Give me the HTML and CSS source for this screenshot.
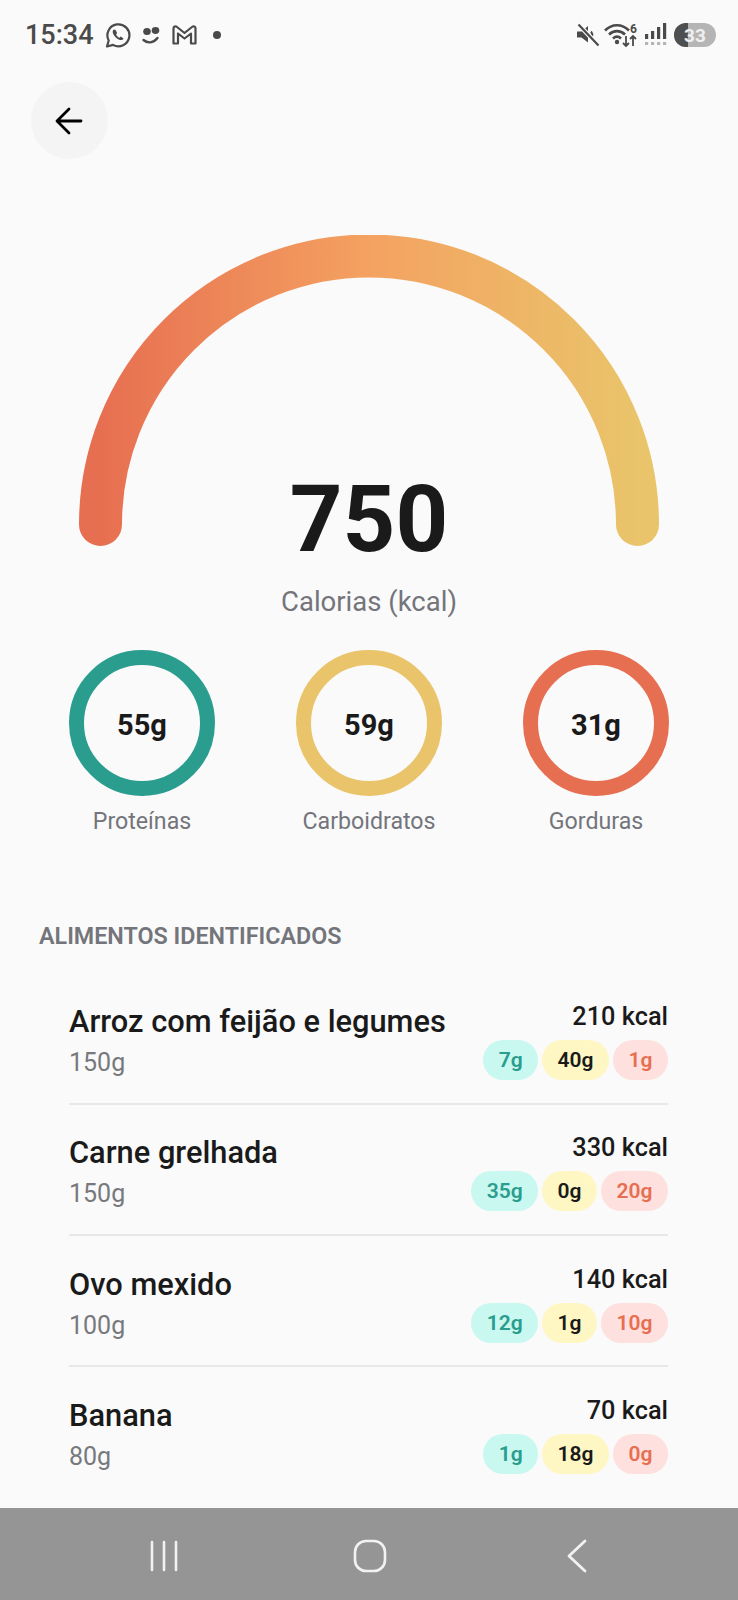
FILE: index.html
```html
<!DOCTYPE html>
<html lang="pt">
<head>
    <meta charset="UTF-8">
    <meta name="viewport" content="width=device-width, initial-scale=1.0">
    <title>Calorias</title>
    <link rel="stylesheet" href="styles.css">
</head>
<body>
    <div class="status-bar">
        <div class="status-left">
            <span class="clock">15:34</span>
            <svg class="ic-whatsapp" width="26" height="26" viewBox="0 0 26 26" fill="none" stroke="#4a4a4a">
                <path d="M2 24.500l1.700-6A11 11 0 1 1 8 22.900z" stroke-width="2.200" stroke-linejoin="round"/>
                <path d="M9 7.500c-1.500 1-1.700 2.600-.6 4.800 1.300 2.600 3.300 4.500 5.700 5.400 2.200.8 3.700.3 4.400-1.200l-2.800-1.900-1.300 1.100c-1.500-.7-2.600-1.900-3.300-3.300l1-1.300-1.500-3z" fill="#4a4a4a" stroke="none"/>
            </svg>
            <svg class="ic-smile" width="20" height="19" viewBox="0 0 20 19">
                <ellipse cx="6" cy="5.500" rx="3.800" ry="3.600" fill="#4a4a4a"/>
                <ellipse cx="14.500" cy="4.500" rx="3.800" ry="3.400" fill="#4a4a4a"/>
                <path d="M2.500 14c4 3.500 9.500 3.500 14-2" fill="none" stroke="#4a4a4a" stroke-width="2.400" stroke-linecap="round"/>
            </svg>
            <svg class="ic-gmail" width="25" height="20" viewBox="0 0 25 20" fill="none" stroke="#4a4a4a" stroke-width="2.200" stroke-linejoin="round">
                <path d="M1.500 18.500V3.500C1.500 1.500 3.500.8 5 2l7.500 6L20 2c1.500-1.200 3.500-.5 3.500 1.500v15h-4.500V8.500l-6.500 5-6.500-5v10z"/>
            </svg>
            <span class="dot"></span>
        </div>
        <div class="status-right">
            <svg class="ic-mute" width="24" height="24" viewBox="0 0 24 24">
                <path d="M1 8.500h4.500L12 3v16.500L5.500 14.500H1z" fill="#4a4a4a"/>
                <path d="M15 8.500c1.300 1.600 1.600 3.200 1 5" fill="none" stroke="#4a4a4a" stroke-width="2"/>
                <path d="M2.500 1.500l20 21" stroke="#fafafa" stroke-width="4.500"/>
                <path d="M2.500 1.500l20 21" stroke="#4a4a4a" stroke-width="2.200"/>
            </svg>
            <svg class="ic-wifi" width="34" height="26" viewBox="0 0 34 26" fill="none" stroke="#4a4a4a">
                <path d="M1 8.500c7-7 17-7 24 0" stroke-width="2.600"/>
                <path d="M5 12.500c4.700-4.500 11.300-4.500 16 0" stroke-width="2.600"/>
                <path d="M9 16.500c2.500-2.300 5.500-2.300 8 0" stroke-width="2.600"/>
                <circle cx="13" cy="20" r="2.200" fill="#4a4a4a" stroke="none"/>
                <path d="M22 14v10M19 21l3 3 3-3M29 24V14M26 17l3-3 3 3" stroke-width="1.800"/>
                <text x="26" y="11" class="wifi-six">6</text>
            </svg>
            <svg class="ic-signal" width="23" height="26" viewBox="0 0 23 26" fill="#4a4a4a">
                <rect x="0" y="12" width="3.200" height="5"/>
                <rect x="6" y="9" width="3.200" height="8"/>
                <rect x="12" y="5" width="3.200" height="12"/>
                <rect x="18" y="1" width="3.200" height="16"/>
                <g fill="#b5b5b5">
                    <rect x="0" y="20" width="3.200" height="3"/>
                    <rect x="6" y="20" width="3.200" height="3"/>
                    <rect x="12" y="20" width="3.200" height="3"/>
                    <rect x="18" y="20" width="3.200" height="3"/>
                </g>
            </svg>
            <div class="battery"><span class="battery-fill"></span><span class="battery-num">33</span></div>
        </div>
    </div>

    <main class="content">
        <button class="back-btn">
            <svg width="28" height="28" viewBox="0 0 28 28" fill="none" stroke="#000" stroke-width="2.800" stroke-linecap="round" stroke-linejoin="round">
                <path d="M26 14H2.500M14 2L2 14l12 12"/>
            </svg>
        </button>

        <div class="gauge">
            <svg class="gauge-arc" width="580" height="331" viewBox="0 0 580 331">
                <defs>
                    <linearGradient id="arcGrad" x1="0" y1="0" x2="1" y2="0">
                        <stop offset="0" stop-color="#E76F51"/>
                        <stop offset="0.5" stop-color="#F4A261"/>
                        <stop offset="1" stop-color="#E9C46A"/>
                    </linearGradient>
                </defs>
                <path d="M21.500 289.500A268.500 268.500 0 0 1 558.500 289.500" fill="none" stroke="url(#arcGrad)" stroke-width="43" stroke-linecap="round"/>
            </svg>
            <div class="gauge-value">750</div>
        </div>
        <div class="gauge-label">Calorias (kcal)</div>

        <div class="macros">
            <div class="macro">
                <div class="ring ring-protein">55g</div>
                <div class="macro-label">Proteínas</div>
            </div>
            <div class="macro">
                <div class="ring ring-carb">59g</div>
                <div class="macro-label">Carboidratos</div>
            </div>
            <div class="macro">
                <div class="ring ring-fat">31g</div>
                <div class="macro-label">Gorduras</div>
            </div>
        </div>

        <h2 class="section-title">ALIMENTOS IDENTIFICADOS</h2>

        <div class="food-list">
            <div class="food">
                <div class="food-info">
                    <div class="food-name">Arroz com feijão e legumes</div>
                    <div class="food-weight">150g</div>
                </div>
                <div class="food-side">
                    <div class="food-kcal">210 kcal</div>
                    <div class="chips">
                        <span class="chip chip-protein">7g</span>
                        <span class="chip chip-carb">40g</span>
                        <span class="chip chip-fat">1g</span>
                    </div>
                </div>
            </div>
            <div class="food">
                <div class="food-info">
                    <div class="food-name">Carne grelhada</div>
                    <div class="food-weight">150g</div>
                </div>
                <div class="food-side">
                    <div class="food-kcal">330 kcal</div>
                    <div class="chips">
                        <span class="chip chip-protein">35g</span>
                        <span class="chip chip-carb">0g</span>
                        <span class="chip chip-fat">20g</span>
                    </div>
                </div>
            </div>
            <div class="food">
                <div class="food-info">
                    <div class="food-name">Ovo mexido</div>
                    <div class="food-weight">100g</div>
                </div>
                <div class="food-side">
                    <div class="food-kcal">140 kcal</div>
                    <div class="chips">
                        <span class="chip chip-protein">12g</span>
                        <span class="chip chip-carb">1g</span>
                        <span class="chip chip-fat">10g</span>
                    </div>
                </div>
            </div>
            <div class="food">
                <div class="food-info">
                    <div class="food-name">Banana</div>
                    <div class="food-weight">80g</div>
                </div>
                <div class="food-side">
                    <div class="food-kcal">70 kcal</div>
                    <div class="chips">
                        <span class="chip chip-protein">1g</span>
                        <span class="chip chip-carb">18g</span>
                        <span class="chip chip-fat">0g</span>
                    </div>
                </div>
            </div>
        </div>
    </main>

    <nav class="nav-bar">
        <svg width="32" height="32" viewBox="0 0 32 32" fill="none" stroke="#f2f2f2" stroke-width="2.600" stroke-linecap="round">
            <path d="M4 2v28M16 2v28M28 2v28"/>
        </svg>
        <svg class="nav-home" width="34" height="34" viewBox="0 0 34 34" fill="none" stroke="#f2f2f2" stroke-width="2.600">
            <rect x="2" y="2" width="30" height="30" rx="11"/>
        </svg>
        <svg class="nav-back" width="22" height="34" viewBox="0 0 22 34" fill="none" stroke="#f2f2f2" stroke-width="2.800" stroke-linecap="round" stroke-linejoin="round">
            <path d="M19 2L3 17l16 15"/>
        </svg>
    </nav>
</body>
</html>
```

FILE: styles.css
```css
*{
    margin: 0;
    padding: 0;
    box-sizing: border-box;
}
body{
    width: 738px;
    height: 1600px;
    overflow: hidden;
    display: flex;
    flex-direction: column;
    background-color: #fafafa;
    font-family: Roboto, "Liberation Sans", sans-serif;
    color: #1a1a1a;
}

/* status bar */
.status-bar{
    height: 70px;
    flex-shrink: 0;
    display: flex;
    justify-content: space-between;
    align-items: center;
    padding: 0 22px 0 25px;
    color: #4a4a4a;
}
.status-left{
    display: flex;
    align-items: center;
}
.clock{
    font-size: 27px;
    font-weight: 500;
    width: 80px;
}
.ic-smile{
    margin-left: 10px;
}
.ic-gmail{
    margin-left: 11px;
}
.dot{
    width: 8px;
    height: 8px;
    border-radius: 50%;
    background-color: #4a4a4a;
    margin-left: 16px;
}
.status-right{
    display: flex;
    align-items: center;
}
.ic-wifi{
    margin-left: 4px;
}
.ic-signal{
    margin-left: 7px;
}
.wifi-six{
    font-family: Roboto, sans-serif;
    font-size: 12px;
    font-weight: 700;
    fill: #4a4a4a;
    stroke: none;
}
.battery{
    position: relative;
    width: 42px;
    height: 24px;
    margin-left: 6px;
    border-radius: 12px;
    background-color: #b5b5b5;
    overflow: hidden;
    display: flex;
    align-items: center;
    justify-content: center;
}
.battery-fill{
    position: absolute;
    left: 0;
    top: 0;
    bottom: 0;
    width: 14px;
    background-color: #4f4f4f;
}
.battery-num{
    position: relative;
    font-size: 19px;
    font-weight: 700;
    color: #f0f0f0;
}

/* main */
.content{
    flex: 1;
    overflow: hidden;
    padding-top: 12px;
}
.back-btn{
    display: flex;
    align-items: center;
    justify-content: center;
    width: 77px;
    height: 77px;
    margin-left: 31px;
    padding-right: 2px;
    border: none;
    border-radius: 50%;
    background-color: #f4f4f4;
}

/* gauge */
.gauge{
    display: grid;
    justify-items: center;
    margin-top: 76px;
}
.gauge-arc{
    grid-area: 1 / 1;
    margin-left: -1px;
}
.gauge-value{
    grid-area: 1 / 1;
    align-self: end;
    font-size: 92px;
    font-weight: 700;
    line-height: 92px;
}
.gauge-label{
    margin-top: 18px;
    text-align: center;
    font-size: 27.5px;
    line-height: 36px;
    color: #73757b;
}

/* macros */
.macros{
    display: flex;
    justify-content: space-between;
    margin-top: 30px;
    padding: 0 69px;
}
.macro{
    width: 146px;
    display: flex;
    flex-direction: column;
    align-items: center;
    white-space: nowrap;
}
.ring{
    width: 146px;
    height: 146px;
    padding-top: 3px;
    border-radius: 50%;
    border: 15px solid;
    display: flex;
    align-items: center;
    justify-content: center;
    font-size: 29px;
    font-weight: 700;
}
.ring-protein{
    border-color: #2A9D8F;
}
.ring-carb{
    border-color: #E9C46A;
}
.ring-fat{
    border-color: #E76F51;
}
.macro-label{
    margin-top: 10px;
    font-size: 23.2px;
    line-height: 30px;
    color: #73757b;
}

/* food list */
.section-title{
    margin: 85px 0 22px 39px;
    font-size: 23.3px;
    font-weight: 600;
    line-height: 30px;
    color: #73757b;
}
.food-list{
    margin: 0 70px 0 69px;
}
.food{
    display: flex;
    justify-content: space-between;
    height: 131.3px;
    padding-top: 26.5px;
    border-bottom: 2px solid #e8e8e8;
}
.food:first-child{
    height: 131.8px;
}
.food:last-child{
    border-bottom: none;
}
.food-info{
    padding-top: 2px;
}
.food-name{
    font-size: 30.8px;
    font-weight: 500;
    line-height: 40px;
}
.food-weight{
    margin-top: 3px;
    font-size: 25px;
    line-height: 36px;
    color: #77797d;
}
.food-side{
    display: flex;
    flex-direction: column;
    align-items: flex-end;
}
.food-kcal{
    font-size: 25.3px;
    font-weight: 500;
    line-height: 34px;
}
.chips{
    display: flex;
    gap: 4px;
    margin-top: 6px;
}
.chip{
    height: 40px;
    padding: 0 15.5px;
    border-radius: 20px;
    font-size: 21px;
    font-weight: 600;
    line-height: 40px;
}
.chip-protein{
    background-color: #c8f8ef;
    color: #2A9D8F;
}
.chip-carb{
    background-color: #fef7c3;
    color: #1a1a1a;
}
.chip-fat{
    background-color: #fee0de;
    color: #E76F51;
}

/* nav bar */
.nav-bar{
    height: 92px;
    flex-shrink: 0;
    display: flex;
    align-items: center;
    padding: 4px 0 0 148px;
    background-color: #959595;
}
.nav-home{
    margin-left: 173px;
}
.nav-back{
    margin-left: 179px;
}
```
